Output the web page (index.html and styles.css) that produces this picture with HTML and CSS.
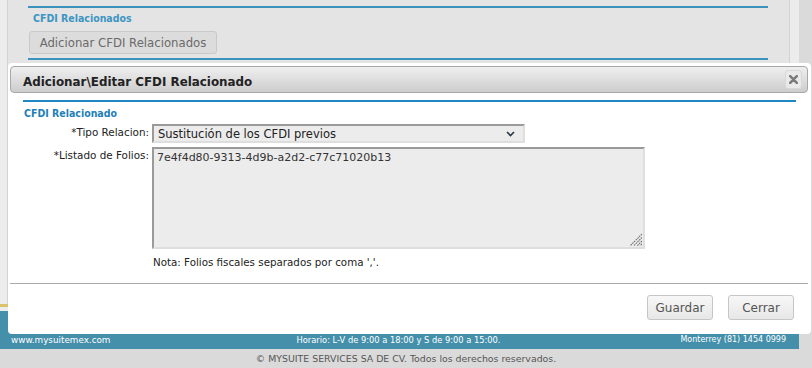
FILE: index.html
```html
<html>
<head>
<title>CFDI Relacionado</title>
<link rel="stylesheet" href="styles.css">
</head>
<body>

<div class="site">
	<div class="main">
		<div class="side"></div>
		<div class="content">
			<div class="panel">
				<div class="panel-title">CFDI Relacionados</div>
				<button class="btn-add">Adicionar CFDI Relacionados</button>
			</div>
		</div>
	</div>
	<div class="gold"></div>
	<div class="footer-bar">
		<span class="f-web">www.mysuitemex.com</span>
		<span class="f-hours">Horario: L-V de 9:00 a 18:00 y S de 9:00 a 15:00.</span>
		<span class="f-phone">Monterrey (81) 1454 0999</span>
	</div>
</div>
<div class="copy">&copy; MYSUITE SERVICES SA DE CV. Todos los derechos reservados.</div>

<div class="dialog">
	<div class="dlg-title">
		<span class="dlg-caption">Adicionar\Editar CFDI Relacionado</span>
		<span class="dlg-close">
			<svg width="9" height="9" viewBox="0 0 9 9"><path d="M1.2 1.2 L7.8 7.8 M7.8 1.2 L1.2 7.8" stroke="#7b7b7b" stroke-width="2.6" stroke-linecap="round"/></svg>
		</span>
	</div>
	<div class="dlg-body">
		<div class="section-head">CFDI Relacionado</div>
		<div class="form">
			<label class="lbl">*Tipo Relacion:</label>
			<div class="select">
				<span>Sustitución de los CFDI previos</span>
				<svg width="9" height="6" viewBox="0 0 9 6"><path d="M1 1 L4.5 4.5 L8 1" fill="none" stroke="#2b3a4a" stroke-width="1.6"/></svg>
			</div>
			<label class="lbl">*Listado de Folios:</label>
			<div class="folios-wrap">
				<textarea class="folios">7e4f4d80-9313-4d9b-a2d2-c77c71020b13</textarea>
				<svg class="grip" width="13" height="13" viewBox="0 0 13 13"><path d="M13 1 L1 13 M13 4.5 L4.5 13 M13 8 L8 13 M13 11 L11 13" stroke="#6f6f6f" stroke-width="1.1" stroke-dasharray="1.6 0.8"/></svg>
			</div>
			<div></div>
			<div class="nota">Nota: Folios fiscales separados por coma ','.</div>
		</div>
	</div>
	<div class="dlg-sep"></div>
	<div class="dlg-buttons">
		<button class="btn">Guardar</button>
		<button class="btn">Cerrar</button>
	</div>
</div>

</body>
</html>
```

FILE: styles.css
```css
body {
	margin: 0;
	background-color: #dadada;
	font-family: "DejaVu Sans", Verdana, sans-serif;
}
.site {
	width: 799px;
	background-color: #ececec;
}
.main {
	display: flex;
	height: 304px;
}
.side {
	width: 7px;
	border-right: 1px solid #d2d2d2;
}
.content {
	width: 781px;
	background-color: #e4e4e4;
	border-right: 1px solid #d2d2d2;
}
.panel {
	margin: 6px 0 0 20px;
	width: 740px;
	border-top: 2px solid #3b93bd;
	border-bottom: 2px solid #3b93bd;
	padding: 3px 0 4px;
}
.panel-title {
	padding-left: 5px;
	font-family: "DejaVu Sans Condensed", "DejaVu Sans", sans-serif;
	font-weight: bold;
	font-size: 10.5px;
	line-height: 14px;
	color: #3d95c3;
}
.btn-add {
	display: block;
	margin: 6px 0 0 1px;
	width: 188px;
	height: 23px;
	padding: 0;
	background-color: #dcdcdc;
	border: 1px solid #c9c9c9;
	border-radius: 3px;
	font-family: "DejaVu Sans", sans-serif;
	font-size: 11.7px;
	color: #6a6a6a;
}
.gold {
	height: 3px;
	background-color: #d9c36c;
}
.footer-bar {
	margin-top: 4px;
	height: 38px;
	box-sizing: border-box;
	background-color: #4490ab;
	display: grid;
	grid-template-columns: 1fr auto 1fr;
	align-items: end;
	padding: 0 13px 4px 11px;
	color: #fff;
	font-size: 8px;
	line-height: 10px;
}
.f-web {
	font-size: 8.8px;
}
.f-hours {
	font-size: 8.3px;
}
.f-phone {
	text-align: right;
}
.copy {
	text-align: center;
	font-size: 9.4px;
	line-height: 19px;
	color: #555;
}

/* dialogo */
.dialog {
	position: absolute;
	left: 8px;
	top: 63px;
	width: 803px;
	height: 271px;
	box-sizing: border-box;
	background-color: #fff;
	border-radius: 4px;
	padding: 3px 3px 0 2px;
}
.dlg-title {
	height: 27px;
	box-sizing: border-box;
	border: 1px solid #a8a8a8;
	border-radius: 4px;
	background: linear-gradient(#efefef, #cdcdcd);
	display: flex;
	align-items: center;
	justify-content: space-between;
	padding: 0 5px 0 12px;
}
.dlg-caption {
	padding-top: 4px;
	font-weight: bold;
	font-size: 11.9px;
	color: #222;
}
.dlg-close {
	width: 17px;
	height: 19px;
	box-sizing: border-box;
	border: 1px solid #d8d8d8;
	border-radius: 3px;
	background-color: #e9e9e9;
	display: flex;
	align-items: center;
	justify-content: center;
}
.dlg-body {
	padding: 0 12px 0 13px;
}
.section-head {
	margin-top: 7px;
	border-top: 2px solid #1f87c1;
	padding: 4px 0 0 1px;
	font-family: "DejaVu Sans Condensed", "DejaVu Sans", sans-serif;
	font-weight: bold;
	font-size: 10.5px;
	line-height: 14px;
	color: #1e7fb9;
}
.form {
	margin-top: 4px;
	display: grid;
	grid-template-columns: 126px auto;
	column-gap: 3px;
	row-gap: 4px;
	justify-content: start;
}
.lbl {
	text-align: right;
	padding-top: 2px;
	font-size: 10.4px;
	line-height: 13px;
	color: #222;
}
.select {
	width: 373px;
	height: 19px;
	box-sizing: border-box;
	border-top: 2px solid #9a9a9a;
	border-left: 2px solid #9a9a9a;
	border-right: 2px solid #dedede;
	border-bottom: 2px solid #dedede;
	background-color: #ececec;
	display: flex;
	align-items: center;
	justify-content: space-between;
	padding: 0 8px 0 4px;
	font-size: 11.5px;
	color: #222;
}
.folios-wrap {
	position: relative;
	width: 493px;
	height: 102px;
}
.folios {
	display: block;
	width: 493px;
	height: 102px;
	box-sizing: border-box;
	margin: 0;
	resize: none;
	border-top: 2px solid #9a9a9a;
	border-left: 2px solid #9a9a9a;
	border-right: 2px solid #dedede;
	border-bottom: 2px solid #dedede;
	background-color: #ececec;
	padding: 2px 3px;
	font-family: "DejaVu Sans", sans-serif;
	font-size: 11px;
	line-height: 13px;
	color: #333;
}
.grip {
	position: absolute;
	right: 3px;
	bottom: 3px;
}
.nota {
	margin-top: 2px;
	padding-left: 1px;
	font-size: 10.3px;
	line-height: 14px;
	color: #222;
}
.dlg-sep {
	margin-top: 14px;
	border-top: 1px solid #a9a9a9;
}
.dlg-buttons {
	display: flex;
	justify-content: flex-end;
	gap: 15px;
	padding: 11px 14px 0 0;
}
.btn {
	width: 66px;
	height: 25px;
	padding: 0;
	border: 1px solid #c6c6c6;
	border-radius: 3px;
	background: linear-gradient(#f7f7f7, #e7e7e7);
	font-family: "DejaVu Sans", sans-serif;
	font-size: 12px;
	color: #555;
}
```
